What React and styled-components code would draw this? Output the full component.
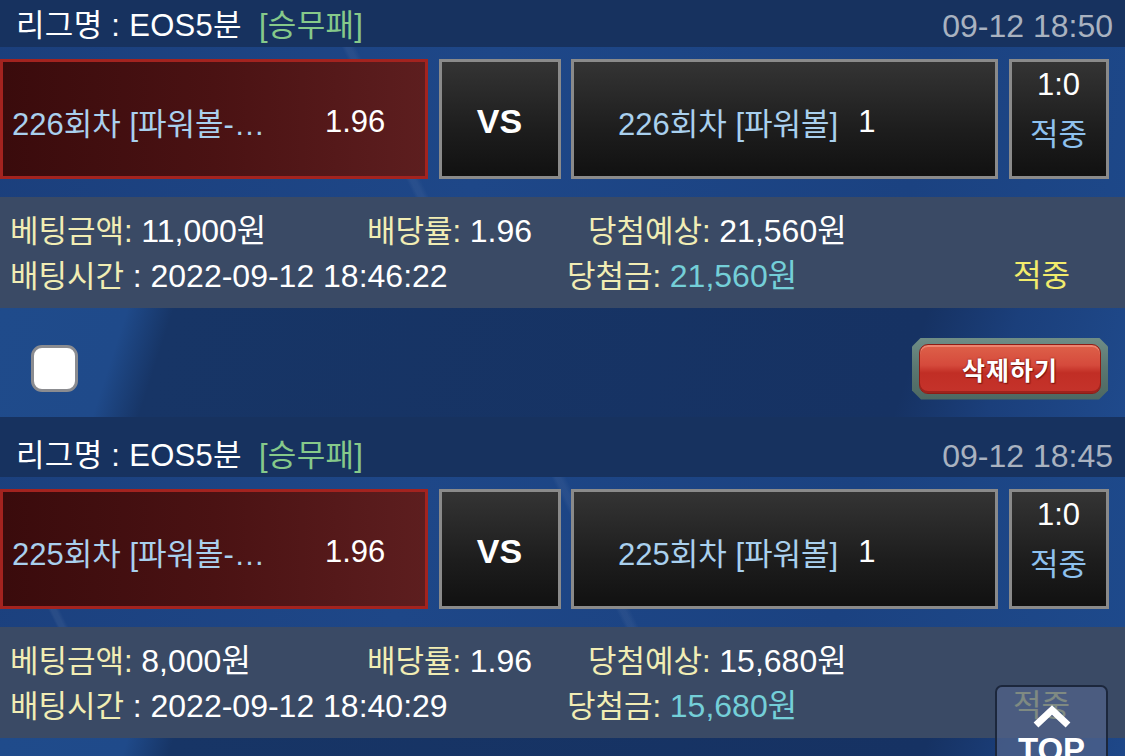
import React from 'react';
import styled, { createGlobalStyle } from 'styled-components';

const GlobalStyle = createGlobalStyle`
  html, body {
    margin: 0;
    padding: 0;
    background: #1d4585;
    font-family: "Liberation Sans", "Noto Sans CJK KR", sans-serif;
    overflow: hidden;
  }
`;

const Page = styled.div`
  width: 1125px;
  height: 756px;
  overflow: hidden;
  position: relative;
  background:
    linear-gradient(64deg, transparent 0 46%, rgba(255,255,255,0.05) 46.3% 46.6%, transparent 47% 100%),
    linear-gradient(64deg, transparent 0 8%, rgba(255,255,255,0.06) 8.2% 8.5%, transparent 8.8% 100%),
    linear-gradient(100deg, #1b3f7c 0%, #1e4788 40%, #1b4281 75%, #1e4a8c 100%);
`;

const List = styled.div`
  margin-top: -13px;
`;

const Section = styled.section`
  display: flex;
  flex-direction: column;
`;

const Header = styled.div`
  height: 60px;
  box-sizing: border-box;
  padding: 17px 12px 0 16px;
  display: flex;
  align-items: center;
  justify-content: space-between;
  background: #17325f;
  font-size: 31px;
  line-height: 44px;
`;

const League = styled.div`
  color: #ffffff;
  white-space: nowrap;
  letter-spacing: 0.3px;
`;

const GameType = styled.span`
  color: #86c98a;
  margin-left: 17px;
`;

const Stamp = styled.div`
  color: #a9b2c0;
  font-size: 32px;
`;

const Match = styled.div`
  display: grid;
  grid-template-columns: 428px 122px 427px 100px;
  column-gap: 10.5px;
  margin-top: 12px;
  height: 120px;
`;

const Box = styled.div`
  box-sizing: border-box;
  height: 120px;
  border: 3px solid ${({ $picked }) => ($picked ? '#a3231f' : '#8a8a8a')};
  background: ${({ $picked }) =>
    $picked
      ? 'linear-gradient(90deg, #3a0b0c 0%, #4a1213 50%, #5d1e1f 100%)'
      : 'linear-gradient(180deg, #343434 0%, #1d1d1d 60%, #111111 100%)'};
  display: flex;
  align-items: center;
  padding-top: 5px;
  font-size: 31px;
  color: #ffffff;
  white-space: nowrap;
`;

const PickBox = styled(Box)`
  padding-left: 9px;
`;

const TeamName = styled.span`
  color: #a9d0ee;
  flex: 0 0 ${({ $width }) => $width || 'auto'};
`;

const Odds = styled.span`
  margin-left: ${({ $gap }) => $gap};
`;

const VsBox = styled(Box)`
  justify-content: center;
  font-weight: bold;
  font-size: 34px;
`;

const AwayBox = styled(Box)`
  padding-left: 44px;
`;

const ScoreBox = styled(Box)`
  flex-direction: column;
  justify-content: flex-start;
  padding-top: 1px;
  gap: 6px;
  line-height: 44px;
`;

const Score = styled.div`
  color: #ffffff;
`;

const ScoreResult = styled.div`
  color: #8ec1ee;
`;

const Info = styled.div`
  margin-top: 18px;
  height: 111px;
  box-sizing: border-box;
  padding: 12px 0 0 10px;
  background: #3a4a65;
  font-size: 31px;
  line-height: 44px;
`;

const InfoRow = styled.div`
  display: grid;
  grid-template-columns: ${({ $cols }) => $cols};
  white-space: nowrap;
`;

const Label = styled.span`
  color: #f1edb4;
`;

const Value = styled.span`
  color: ${({ $tone }) => ($tone === 'win' ? '#74cfd8' : '#ffffff')};
  font-size: 32px;
`;

const Result = styled.span`
  color: #f2ec6c;
`;

const Actions = styled.div`
  height: 109px;
  box-sizing: border-box;
  padding: 12px 17px 0 31px;
  display: flex;
  align-items: center;
  justify-content: space-between;
  background: linear-gradient(108deg, #1f4b8b 0%, #1f4a8a 11%, #173566 15%, #163263 80%, #1b3f7b 88%, #1f4a8c 100%);
`;

const Check = styled.div`
  width: 47px;
  height: 47px;
  box-sizing: border-box;
  background: #ffffff;
  border: 3px solid #8b8c90;
  border-radius: 11px;
`;

const DeleteFrame = styled.div`
  width: 196px;
  height: 62px;
  box-sizing: border-box;
  padding: 6px 7px;
  background: linear-gradient(180deg, #6f8d86 0%, #5a7670 50%, #4d6862 100%);
  clip-path: polygon(9px 0, calc(100% - 9px) 0, 100% 9px, 100% calc(100% - 9px), calc(100% - 9px) 100%, 9px 100%, 0 calc(100% - 9px), 0 9px);
`;

const DeleteButton = styled.button`
  width: 100%;
  height: 100%;
  border: 1px solid #8e1c15;
  border-radius: 9px;
  background: linear-gradient(180deg, #de6149 0%, #d54a3c 42%, #c12e25 58%, #c5332b 100%);
  box-shadow: inset 0 2px 0 rgba(255, 180, 160, 0.45), inset 0 -2px 0 rgba(120, 20, 15, 0.5);
  color: #ffffff;
  font-family: "Noto Sans CJK KR", sans-serif;
  font-weight: bold;
  font-size: 25px;
  letter-spacing: 1px;
  padding: 0;
  text-shadow: 0 0 2px #7a1510, 1px 1px 1px #7a1510;
`;

const TopButton = styled.div`
  position: absolute;
  right: 17px;
  top: 685px;
  width: 113px;
  height: 90px;
  box-sizing: border-box;
  border: 2px solid #1c273c;
  border-radius: 7px;
  background: rgba(82, 100, 138, 0.72);
  display: flex;
  flex-direction: column;
  align-items: center;
  padding-top: 17px;
`;

const TopLabel = styled.div`
  color: #ffffff;
  font-family: "Liberation Sans", sans-serif;
  font-weight: bold;
  font-size: 33px;
  line-height: 30px;
  margin-top: 5px;
`;

const bets = [
  {
    round: 226,
    stamp: '09-12 18:50',
    odds: '1.96',
    amount: '11,000원',
    expect: '21,560원',
    betTime: '2022-09-12 18:46:22',
    win: '21,560원',
  },
  {
    round: 225,
    stamp: '09-12 18:45',
    odds: '1.96',
    amount: '8,000원',
    expect: '15,680원',
    betTime: '2022-09-12 18:40:29',
    win: '15,680원',
  },
];

const BetCard = ({ bet }) => (
  <Section>
    <Header>
      <League>
        리그명 : EOS5분<GameType>[승무패]</GameType>
      </League>
      <Stamp>{bet.stamp}</Stamp>
    </Header>
    <Match>
      <PickBox $picked>
        <TeamName $width="270px">{bet.round}회차 [파워볼-…</TeamName>
        <Odds $gap="43px">{bet.odds}</Odds>
      </PickBox>
      <VsBox>VS</VsBox>
      <AwayBox>
        <TeamName>{bet.round}회차 [파워볼]</TeamName>
        <Odds $gap="20px">1</Odds>
      </AwayBox>
      <ScoreBox>
        <Score>1:0</Score>
        <ScoreResult>적중</ScoreResult>
      </ScoreBox>
    </Match>
    <Info>
      <InfoRow $cols="357px 221px auto">
        <span>
          <Label>베팅금액: </Label>
          <Value>{bet.amount}</Value>
        </span>
        <span>
          <Label>배당률: </Label>
          <Value>{bet.odds}</Value>
        </span>
        <span>
          <Label>당첨예상: </Label>
          <Value>{bet.expect}</Value>
        </span>
      </InfoRow>
      <InfoRow $cols="557px 446px auto">
        <span>
          <Label>배팅시간 </Label>
          <Value>: {bet.betTime}</Value>
        </span>
        <span>
          <Label>당첨금: </Label>
          <Value $tone="win">{bet.win}</Value>
        </span>
        <Result>적중</Result>
      </InfoRow>
    </Info>
    <Actions>
      <Check />
      <DeleteFrame>
        <DeleteButton>삭제하기</DeleteButton>
      </DeleteFrame>
    </Actions>
  </Section>
);

export default function App() {
  return (
    <Page>
      <GlobalStyle />
      <List>
        {bets.map((bet) => (
          <BetCard key={bet.round} bet={bet} />
        ))}
      </List>
      <TopButton>
        <svg width="42" height="26" viewBox="0 0 42 26">
          <polyline points="5,21 21,6 37,21" fill="none" stroke="#ffffff" strokeWidth="7" strokeLinejoin="miter" />
        </svg>
        <TopLabel>TOP</TopLabel>
      </TopButton>
    </Page>
  );
}
